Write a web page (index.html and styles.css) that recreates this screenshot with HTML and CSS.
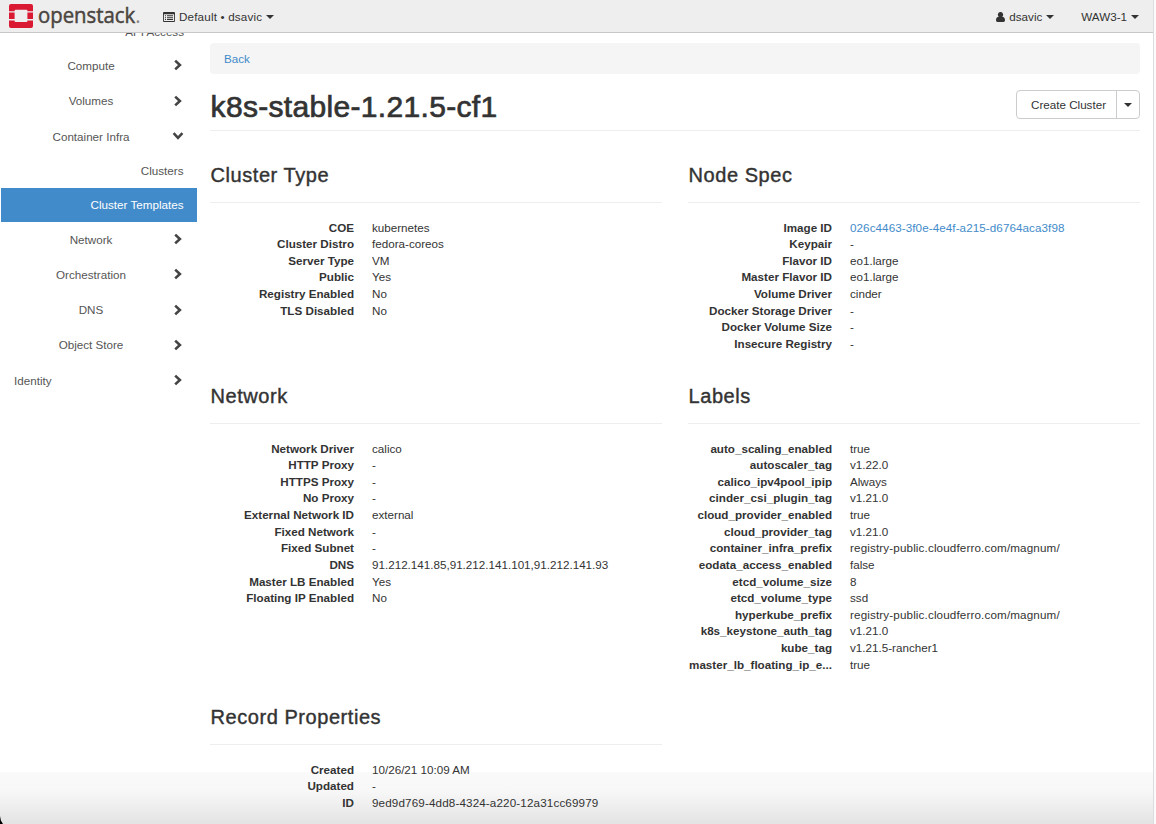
FILE: index.html
```html
<!DOCTYPE html>
<html lang="en">
<head>
<meta charset="utf-8">
<title>k8s-stable-1.21.5-cf1 - OpenStack Dashboard</title>
<link rel="stylesheet" href="styles.css">
</head>
<body>
<svg class="defs" width="0" height="0"><defs>
<symbol id="chev" viewBox="0 0 10 12"><path d="M2.2 1.6 6.9 6 2.2 10.4" fill="none" stroke="currentColor" stroke-width="2.6"/></symbol>
</defs></svg>
<div class="page">
<header class="topbar">
  <a class="brand">
    <svg class="mark" width="24" height="24" viewBox="0 0 24 24"><path fill="#da1a32" d="M2 0h20a2 2 0 0 1 2 2v5.3h-5.6V6.8a1 1 0 0 0-1-1H6.600a1 1 0 0 0-1 1v.5H0V2a2 2 0 0 1 2-2zM0 8.600h5.600v6.500H0zM18.400 8.600H24v6.500h-5.600zM0 16.400h5.600v.5a1 1 0 0 0 1 1h10.800a1 1 0 0 0 1-1v-.5H24V22a2 2 0 0 1-2 2H2a2 2 0 0 1-2-2z"/></svg>
    <span class="wordmark">openstack<i>.</i></span>
  </a>
  <div class="project">
    <svg width="12" height="10" viewBox="0 0 12 10"><path fill="#333" fill-rule="evenodd" d="M1 0h10a1 1 0 0 1 1 1v8a1 1 0 0 1-1 1H1a1 1 0 0 1-1-1V1a1 1 0 0 1 1-1zM.9 2.300v6.700h10.200V2.300zM2 3.200h1v1H2zM4 3.200h6v1H4zM2 5.200h1v1H2zM4 5.200h6v1H4zM2 7.100h1v1H2zM4 7.100h6v1H4z"/></svg>
    <span>Default • dsavic</span><b class="caret"></b>
  </div>
  <div class="user">
    <svg width="9" height="10" viewBox="0 0 9 10"><path fill="#333" d="M4.500 0a2.500 2.700 0 0 1 1.700 4.800C8 4.900 9 6 9 8.300 9 9.400 8.300 10 7.400 10H1.600C.7 10 0 9.400 0 8.300 0 6 1 4.900 2.800 4.800A2.500 2.700 0 0 1 4.500 0z"/></svg>
    <span>dsavic</span><b class="caret"></b>
  </div>
  <div class="region"><span>WAW3-1</span><b class="caret"></b></div>
</header>
<div class="body">
<nav class="sidebar">
  <div class="clip"><span>API Access</span></div>
  <div class="item"><span>Compute</span><svg class="chev"><use href="#chev"/></svg></div>
  <div class="item"><span>Volumes</span><svg class="chev"><use href="#chev"/></svg></div>
  <div class="item"><span>Container Infra</span><svg class="chev open"><use href="#chev"/></svg></div>
  <div class="sub">Clusters</div>
  <div class="sub active">Cluster Templates</div>
  <div class="item"><span>Network</span><svg class="chev"><use href="#chev"/></svg></div>
  <div class="item"><span>Orchestration</span><svg class="chev"><use href="#chev"/></svg></div>
  <div class="item"><span>DNS</span><svg class="chev"><use href="#chev"/></svg></div>
  <div class="item"><span>Object Store</span><svg class="chev"><use href="#chev"/></svg></div>
  <div class="item root"><span>Identity</span><svg class="chev"><use href="#chev"/></svg></div>
</nav>
<main class="content">
  <div class="crumb"><a>Back</a></div>
  <div class="title">
    <h1>k8s-stable-1.21.5-cf1</h1>
    <div class="actions"><button>Create Cluster</button><button class="toggle"><b class="caret"></b></button></div>
  </div>
  <div class="grid">
    <section>
      <h3>Cluster Type</h3>
      <dl>
        <dt>COE</dt><dd>kubernetes</dd>
        <dt>Cluster Distro</dt><dd>fedora-coreos</dd>
        <dt>Server Type</dt><dd>VM</dd>
        <dt>Public</dt><dd>Yes</dd>
        <dt>Registry Enabled</dt><dd>No</dd>
        <dt>TLS Disabled</dt><dd>No</dd>
      </dl>
    </section>
    <section>
      <h3>Node Spec</h3>
      <dl>
        <dt>Image ID</dt><dd class="uuid"><a>026c4463-3f0e-4e4f-a215-d6764aca3f98</a></dd>
        <dt>Keypair</dt><dd>-</dd>
        <dt>Flavor ID</dt><dd>eo1.large</dd>
        <dt>Master Flavor ID</dt><dd>eo1.large</dd>
        <dt>Volume Driver</dt><dd>cinder</dd>
        <dt>Docker Storage Driver</dt><dd>-</dd>
        <dt>Docker Volume Size</dt><dd>-</dd>
        <dt>Insecure Registry</dt><dd>-</dd>
      </dl>
    </section>
    <section>
      <h3>Network</h3>
      <dl>
        <dt>Network Driver</dt><dd>calico</dd>
        <dt>HTTP Proxy</dt><dd>-</dd>
        <dt>HTTPS Proxy</dt><dd>-</dd>
        <dt>No Proxy</dt><dd>-</dd>
        <dt>External Network ID</dt><dd>external</dd>
        <dt>Fixed Network</dt><dd>-</dd>
        <dt>Fixed Subnet</dt><dd>-</dd>
        <dt>DNS</dt><dd>91.212.141.85,91.212.141.101,91.212.141.93</dd>
        <dt>Master LB Enabled</dt><dd>Yes</dd>
        <dt>Floating IP Enabled</dt><dd>No</dd>
      </dl>
    </section>
    <section>
      <h3>Labels</h3>
      <dl>
        <dt>auto_scaling_enabled</dt><dd>true</dd>
        <dt>autoscaler_tag</dt><dd>v1.22.0</dd>
        <dt>calico_ipv4pool_ipip</dt><dd>Always</dd>
        <dt>cinder_csi_plugin_tag</dt><dd>v1.21.0</dd>
        <dt>cloud_provider_enabled</dt><dd>true</dd>
        <dt>cloud_provider_tag</dt><dd>v1.21.0</dd>
        <dt>container_infra_prefix</dt><dd class="url">registry-public.cloudferro.com/magnum/</dd>
        <dt>eodata_access_enabled</dt><dd>false</dd>
        <dt>etcd_volume_size</dt><dd>8</dd>
        <dt>etcd_volume_type</dt><dd>ssd</dd>
        <dt>hyperkube_prefix</dt><dd class="url">registry-public.cloudferro.com/magnum/</dd>
        <dt>k8s_keystone_auth_tag</dt><dd>v1.21.0</dd>
        <dt>kube_tag</dt><dd>v1.21.5-rancher1</dd>
        <dt>master_lb_floating_ip_e...</dt><dd>true</dd>
      </dl>
    </section>
    <section>
      <h3>Record Properties</h3>
      <dl>
        <dt>Created</dt><dd>10/26/21 10:09 AM</dd>
        <dt>Updated</dt><dd>-</dd>
        <dt>ID</dt><dd class="url">9ed9d769-4dd8-4324-a220-12a31cc69979</dd>
      </dl>
    </section>
  </div>
</main>
</div>
<div class="corner"></div>
</div>
</body>
</html>
```
FILE: styles.css
```css
* { box-sizing: border-box; }
html, body { margin: 0; height: 824px; overflow: hidden; }
body {
  font-family: "Liberation Sans", Arial, sans-serif;
  font-size: 11.65px;
  line-height: 16.62px;
  color: #333;
  background: #fafafa;
}
.defs { position: absolute; }
.page {
  position: relative;
  width: 1154px;
  height: 824px;
  border-right: 1px solid #ddd;
  background: linear-gradient(#fff 772px, #fafafa 772px, #f8f8f8 790px, #e3e3e3 824px);
}
.corner {
  position: absolute;
  left: 0;
  bottom: 0;
  width: 3px;
  height: 8px;
  background: #000;
  clip-path: polygon(0 0, 30% 55%, 100% 100%, 0 100%);
}
.topbar {
  display: flex;
  align-items: center;
  height: 33px;
  padding-left: 9px;
  background: #eee;
  border-bottom: 1px solid #c8c8c8;
}
.brand { display: flex; align-items: center; width: 154px; height: 32px; }
.mark { flex: none; }
.wordmark {
  font-family: "Open Sans", sans-serif;
  font-size: 22px;
  line-height: 26px;
  margin: 0 0 5px 5px;
  color: #4b4540;
  -webkit-text-stroke: .5px #4b4540;
  transform: scaleX(.925);
  transform-origin: left;
}
.wordmark i { font-style: normal; color: #8a8580; -webkit-text-stroke: 0; }
.project, .user, .region { display: flex; align-items: center; height: 32px; padding-top: 2px; white-space: nowrap; }
.project span { margin-left: 4px; letter-spacing: .17px; }
.user { margin-left: auto; }
.user span { margin-left: 4px; }
.region { margin: 0 14px 0 27px; }
.caret {
  width: 0;
  height: 0;
  margin-left: 4px;
  border: 4px solid transparent;
  border-top: 4.5px solid #333;
  border-bottom: 0;
}
.body { display: flex; }
.sidebar { width: 197px; flex: none; color: #555; padding-left: 1px; }
.clip { height: 15.8px; padding-right: 13px; text-align: right; overflow: hidden; }
.clip span { display: block; margin-top: -9.5px; }
.item { display: flex; align-items: center; height: 35.25px; padding-right: 14px; }
.item span { width: 180px; text-align: center; flex: none; }
.item .chev { margin: -2px 0 0 -8px; }
.item.root span { text-align: left; padding-left: 13px; }
.chev { width: 10px; height: 12px; flex: none; color: #444; }
.chev.open { transform: rotate(90deg); }
.sub { display: flex; align-items: center; justify-content: flex-end; height: 33.2px; padding: 1px 13.5px 0 0; }
.sub.active { height: 34.7px; background: #428bca; color: #fff; }
.content { width: 930px; margin: 10px 0 0 13px; }
.crumb { height: 31px; padding: 8px 14px; background: #f5f5f5; border-radius: 4px; }
a { color: #428bca; }
.title { display: flex; justify-content: space-between; height: 57px; border-bottom: 1px solid #eee; }
h1, h3 { margin: 0; font-weight: 400; -webkit-text-stroke: .4px #333; white-space: nowrap; }
h1 { font-size: 30px; line-height: 34px; padding: 16px 0 0 .6px; letter-spacing: .32px; -webkit-text-stroke-width: .7px; }
.actions { display: flex; height: 29px; margin-top: 16px; }
button {
  width: 102px;
  padding: 1px 0 0 3px;
  font: inherit;
  color: #333;
  background: #fff;
  border: 1px solid #ccc;
  border-radius: 4px 0 0 4px;
}
.toggle { display: flex; align-items: center; justify-content: center; width: 24px; margin-left: -2px; padding: 0; border-radius: 0 4px 4px 0; }
.toggle .caret { margin: 0; }
.grid { display: grid; grid-template-columns: 452px 452px; column-gap: 26px; grid-template-rows: 221px 321px 108px; margin-top: 32px; }
h3 { height: 40px; padding-left: .6px; font-size: 20px; line-height: 24px; letter-spacing: .55px; border-bottom: 1px solid #eee; }
dl { display: grid; grid-template-columns: 144px 1fr; column-gap: 18px; margin: 16.5px 0 0; }
dt { font-weight: 700; text-align: right; white-space: nowrap; }
dd { margin: 0; white-space: nowrap; }
.uuid { letter-spacing: .08px; }
.url { letter-spacing: .14px; }
```
